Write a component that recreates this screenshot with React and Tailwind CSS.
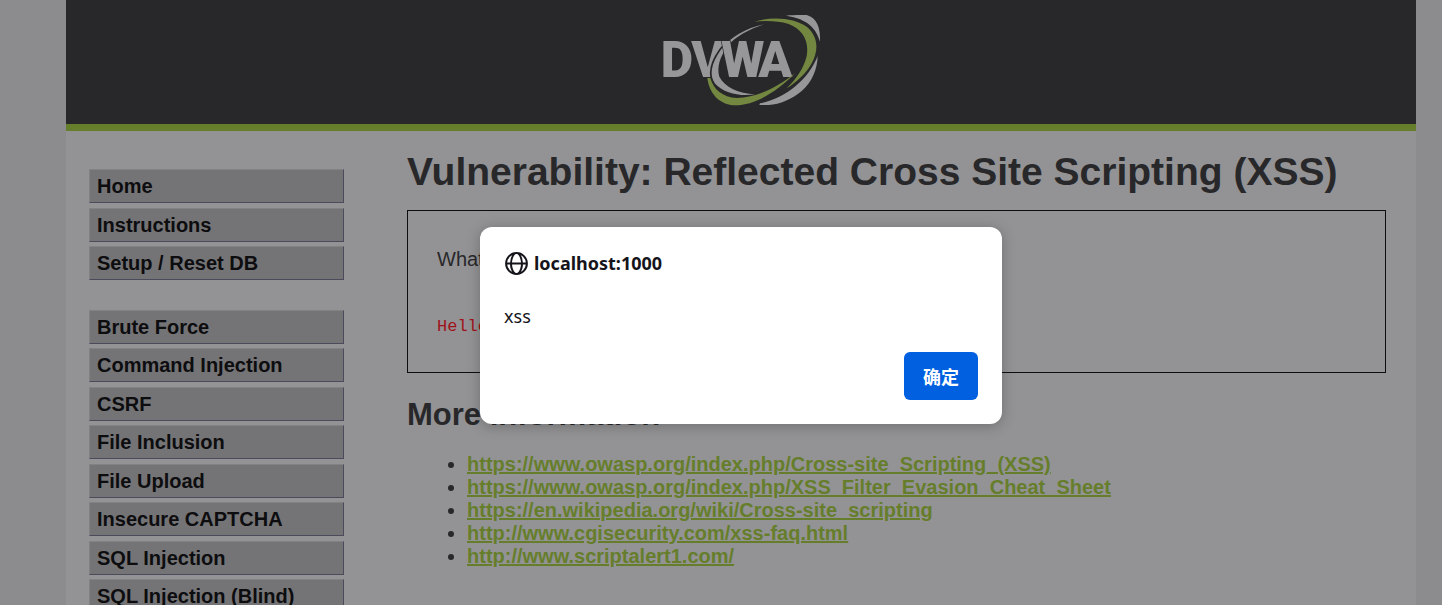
const MENU_GROUPS = [
  {
    height: 'h-[111px]',
    items: ['Home', 'Instructions', 'Setup / Reset DB'],
  },
  {
    height: 'h-[303px]',
    items: [
      'Brute Force',
      'Command Injection',
      'CSRF',
      'File Inclusion',
      'File Upload',
      'Insecure CAPTCHA',
      'SQL Injection',
      'SQL Injection (Blind)',
    ],
  },
];

const LINKS = [
  'https://www.owasp.org/index.php/Cross-site_Scripting_(XSS)',
  'https://www.owasp.org/index.php/XSS_Filter_Evasion_Cheat_Sheet',
  'https://en.wikipedia.org/wiki/Cross-site_scripting',
  'http://www.cgisecurity.com/xss-faq.html',
  'http://www.scriptalert1.com/',
];

function Logo() {
  return (
    <svg width="162" height="92" viewBox="60 42 486 276" role="img" aria-label="DVWA">
      <g
        fill="#979799"
        stroke="#28282a"
        paintOrder="stroke"
        fontFamily="Roboto, sans-serif"
        fontWeight="900"
        fontSize="150"
      >
        <text x="62" y="232" strokeWidth="0">D</text>
        <text x="154" y="232" strokeWidth="0">V</text>
        {/* arc passes over the V and behind the W */}
        <path
          strokeWidth="10"
          d="M372 73C318 84 270 112 242 150C214 190 206 226 226 252C252 280 300 290 345 283C296 280 254 262 238 230C230 200 240 170 262 140C286 108 330 88 372 73Z"
        />
        <text x="243" y="232" strokeWidth="4">W</text>
        <text x="355" y="232" strokeWidth="4">A</text>
      </g>
      <path
        fill="#738740"
        d="M202 234C206 268 226 306 272 315C340 322 412 274 466 219C412 262 350 294 290 294C248 292 220 268 211 234Z"
      />
      <path
        fill="#738740"
        d="M343 65C400 48 462 54 500 80C534 108 538 150 514 192C496 222 470 246 440 265C468 238 492 204 500 168C508 122 488 88 446 72C414 62 376 62 343 65Z"
      />
      <path fill="#979799" d="M438 47C462 44 484 45 500 45C532 54 542 86 540 125C530 88 504 56 438 47Z" />
      <path
        fill="#979799"
        d="M533 168C532 208 516 246 486 272C456 298 420 312 386 315H358L360 310C436 296 506 238 533 168Z"
      />
    </svg>
  );
}

function GlobeIcon() {
  return (
    <svg width="25" height="24" viewBox="0 0 25 24" fill="none" stroke="#15141a" strokeWidth="2" aria-hidden="true">
      <circle cx="12.5" cy="12.5" r="10.4" />
      <path d="M2 12.5h21M10.5 2.4C5.8 8 5.8 17 10.5 22.6M14.5 2.4C19.2 8 19.2 17 14.5 22.6" />
    </svg>
  );
}

function Menu() {
  return (
    <nav className="flex w-[255px] shrink-0 flex-col gap-[30px] pt-[38px]">
      {MENU_GROUPS.map((group) => (
        <ul key={group.items[0]} className={`flex flex-col justify-between ${group.height}`}>
          {group.items.map((item) => (
            <li key={item}>
              <a
                href="#"
                className="block h-[34px] border border-t-[#828284] border-r-[#4a4c5c] border-b-[#4a4c5c] border-l-[#828284] bg-[#747476] px-[7px] text-[20px] leading-[32px] font-bold text-[#0d0d0f]"
              >
                {item}
              </a>
            </li>
          ))}
        </ul>
      ))}
    </nav>
  );
}

function AlertDialog() {
  return (
    <div className="absolute inset-0 flex items-start justify-center pt-[227px] pr-[26px] pl-[66px]">
      <div
        role="alertdialog"
        aria-labelledby="alert-title"
        aria-describedby="alert-text"
        className="w-[522px] rounded-xl bg-white p-6 font-['Noto_Sans','Noto_Sans_CJK_SC',sans-serif] text-[18px] text-[#15141a] shadow-[0_2px_14px_rgba(0,0,0,0.25)]"
      >
        <div className="flex items-center gap-[5px]">
          <GlobeIcon />
          <h2 id="alert-title" className="leading-6 font-bold">localhost:1000</h2>
        </div>
        <p id="alert-text" className="mt-[29px] leading-6">xss</p>
        <div className="mt-6 flex justify-end">
          <button
            type="button"
            className="h-12 w-[74px] rounded-md bg-[#0060df] font-['Noto_Sans_CJK_SC',sans-serif] font-bold text-white"
          >
            确定
          </button>
        </div>
      </div>
    </div>
  );
}

export default function App() {
  return (
    <div className="relative h-screen overflow-hidden bg-[#8c8c8e] pr-[26px] pl-[66px] font-['Liberation_Sans',Arial,sans-serif] text-[#28282a]">
      <div className="min-h-full bg-[#939395]">
        <header className="flex h-[131px] justify-center border-b-[7px] border-[#667e2b] bg-[#28282a] pt-[14px]">
          <Logo />
        </header>

        <div className="flex gap-[63px] pr-[30px] pl-[23px]">
          <Menu />

          <main className="min-w-0 flex-1 pt-[18px]">
            <h1 className="text-[39px] leading-[46px] font-bold">
              Vulnerability: Reflected Cross Site Scripting (XSS)
            </h1>

            <section className="mt-[15px] h-[163px] border border-[#0d0d0f] px-[29px] pt-9">
              <p className="text-[20px] leading-6">What's your name?</p>
              <pre className="mt-11 font-['Liberation_Mono',monospace] text-[17px] leading-6 text-[#a0121a]">
                Hello
              </pre>
            </section>

            <h2 className="mt-6 text-[31px] leading-9 font-bold">More Information</h2>

            <ul className="mt-5 list-disc pl-[60px] text-[20px] leading-[23px]">
              {LINKS.map((url) => (
                <li key={url}>
                  <a href={url} className="font-bold text-[#667e2b] underline decoration-2">{url}</a>
                </li>
              ))}
            </ul>
          </main>
        </div>
      </div>

      <AlertDialog />
    </div>
  );
}
